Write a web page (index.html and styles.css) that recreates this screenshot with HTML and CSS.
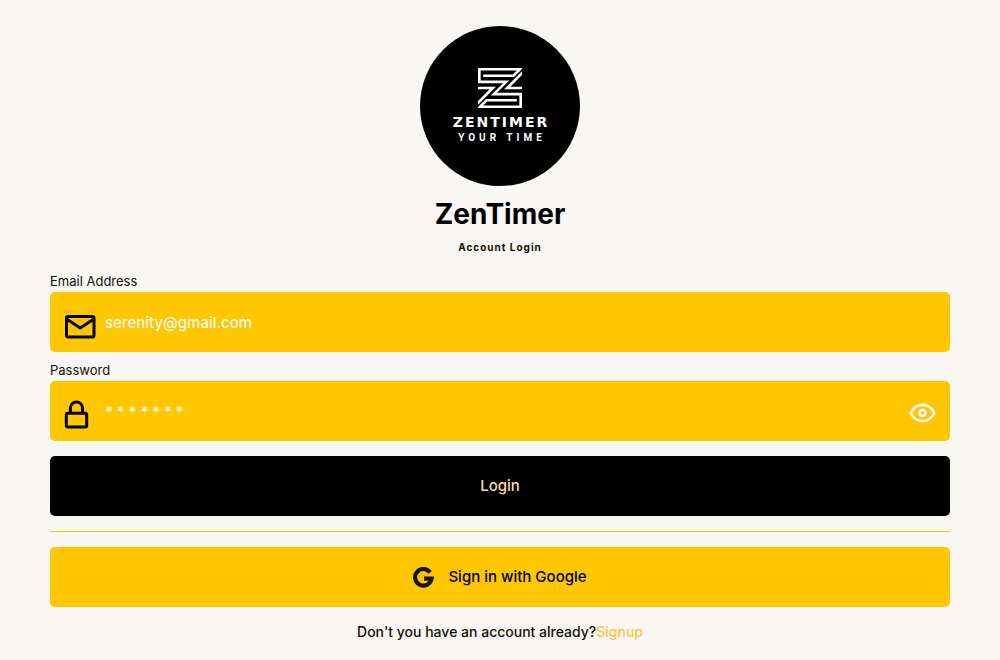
FILE: index.html
```html
<!DOCTYPE html>
<html lang="en">
<head>
<meta charset="utf-8">
<meta name="viewport" content="width=device-width, initial-scale=1">
<title>ZenTimer - Account Login</title>
<link rel="stylesheet" href="styles.css">
</head>
<body>
<main class="page">
  <header class="brand">
    <div class="logo">
      <svg class="logo-mark" viewBox="0 0 43 39" aria-hidden="true">
        <g fill="none" stroke="#fff" stroke-width="2.6">
          <path d="M5 7.500H34.700L41 1.200H1.300V13.500H27.500L15.500 25.500H41.700V37.800H2L8.300 31.500H38"/>
          <path d="M44 4L28.500 19.500H43"/>
          <path d="M-1 35L14.500 19.500H0"/>
        </g>
      </svg>
      <span class="logo-name">ZENTIMER</span>
      <span class="logo-tag">YOUR TIME</span>
    </div>
    <h1 class="title">ZenTimer</h1>
    <h2 class="subtitle">Account Login</h2>
  </header>

  <form class="form">
    <div class="field">
      <label class="label" for="email">Email Address</label>
      <div class="control">
        <svg class="icon" viewBox="0 0 32 32" aria-hidden="true"><g fill="none" stroke="#000" stroke-width="3" stroke-linejoin="round"><rect x="2.500" y="6.500" width="27.500" height="20.500" rx="1.800"/><path d="M3 9.300L16.200 18L29.500 9.300"/></g></svg>
        <input class="input" id="email" type="email" placeholder="serenity@gmail.com">
      </div>
    </div>
    <div class="field">
      <label class="label" for="password">Password</label>
      <div class="control">
        <svg class="icon" viewBox="0 0 32 32" aria-hidden="true"><g fill="none" stroke="#000" stroke-width="3"><rect x="2.300" y="14.200" width="20.400" height="13.800" rx="1.500"/><path d="M6.400 14V9.100a6.100 6.100 0 0 1 12.200 0V14"/></g></svg>
        <input class="input" id="password" type="password" placeholder="* * * * * * *">
        <button class="reveal" type="button" aria-label="Show password">
          <svg viewBox="0 0 28 28" aria-hidden="true"><g fill="none" stroke="#f8f7f3" stroke-width="2.700"><path d="M2.700 14C5.300 9 9.300 5.800 14.500 5.800S23.700 9 26.300 14C23.700 19 19.700 22.200 14.500 22.200S5.300 19 2.700 14Z" stroke-linejoin="round"/><circle cx="14.500" cy="14" r="3"/></g></svg>
        </button>
      </div>
    </div>
    <button class="button button-dark" type="submit">Login</button>
    <hr class="divider">
    <button class="button button-google" type="button">
      <svg class="google" viewBox="0 0 20 20" aria-hidden="true"><path d="M16.300 5.200A7.900 7.900 0 1 0 17.700 11.100H10.500" fill="none" stroke="#1a1303" stroke-width="3.900"/></svg>
      Sign in with Google
    </button>
  </form>
  <p class="footer">Don't you have an account already?<a class="link" href="#signup">Signup</a></p>
</main>
</body>
</html>
```
FILE: styles.css
```css
* { box-sizing: border-box; }

body {
  margin: 0;
  background: #f8f7f3;
  color: #150f01;
  font-family: Inter, "Liberation Sans", sans-serif;
}

.page { padding: 26px 50px 16px; }

.brand {
  display: flex;
  flex-direction: column;
  align-items: center;
}

.logo {
  display: flex;
  flex-direction: column;
  align-items: center;
  width: 160px;
  height: 160px;
  padding-top: 42px;
  border-radius: 50%;
  background: #000;
  color: #fff;
}

.logo-mark { width: 44px; height: 40px; }

.logo-name {
  margin-top: 6px;
  padding-left: 2px;
  font: 700 14px/16px "DejaVu Sans", sans-serif;
  letter-spacing: 2px;
}

.logo-tag {
  padding-left: 4px;
  font: 700 10px/16px Roboto, sans-serif;
  letter-spacing: 4px;
}

.title {
  margin: 10px 0 0;
  color: #000;
  font-size: 28px;
  line-height: 36px;
}

.subtitle {
  margin: 8px 0 0;
  font-size: 10px;
  line-height: 14px;
  letter-spacing: 1px;
}

.form { margin-top: 19px; }

.field { margin-bottom: 10px; }

.label {
  display: block;
  font-size: 13px;
  line-height: 16px;
}

.control {
  display: flex;
  align-items: center;
  height: 60px;
  margin-top: 3px;
  padding: 0 14px;
  border-radius: 5px;
  background: #ffc700;
}

.icon {
  flex: none;
  width: 32px;
  height: 32px;
  margin-top: 8px;
}

.input {
  flex: 1;
  min-width: 0;
  height: 60px;
  padding: 0 9px;
  border: 0;
  outline: 0;
  background: none;
  color: #f8f7f3;
  font: 500 15px/20px Inter, sans-serif;
}

.input::placeholder { color: #f8f7f3; opacity: 1; }

.reveal {
  width: 28px;
  height: 28px;
  margin-top: 4px;
  padding: 0;
  border: 0;
  background: none;
}

.reveal svg { display: block; }

.button {
  display: flex;
  align-items: center;
  justify-content: center;
  gap: 14px;
  width: 100%;
  height: 60px;
  border: 0;
  border-radius: 5px;
  font: 500 15px/20px Inter, sans-serif;
}

.button-dark {
  margin-top: 15px;
  background: #000;
  color: #fddd92;
}

.button-google { background: #ffc700; color: #000; }

.google { width: 21px; height: 21px; }

.divider {
  height: 1px;
  margin: 15px 0;
  border: 0;
  background: #ffc700;
}

.footer {
  margin: 16px 0 0;
  font-size: 14px;
  font-weight: 500;
  line-height: 18px;
  text-align: center;
}

.link { color: #ffc43d; text-decoration: none; }
```
